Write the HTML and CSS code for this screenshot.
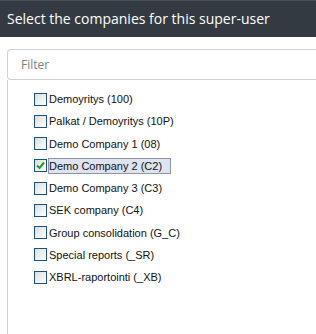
FILE: index.html
```html
<!DOCTYPE html>
<html lang="en">
<head>
    <meta charset="UTF-8">
    <title>Select companies</title>
    <link rel="stylesheet" href="styles.css">
</head>
<body>
    <div class="dialog-header">Select the companies for this super-user</div>

    <div class="dialog-body">
        <div class="filter">
            <input type="text" placeholder="Filter">
        </div>

        <ul class="company-list">
            <li><span class="check"></span><span class="name">Demoyritys (100)</span></li>
            <li><span class="check"></span><span class="name">Palkat / Demoyritys (10P)</span></li>
            <li><span class="check"></span><span class="name">Demo Company 1 (08)</span></li>
            <li class="selected">
                <span class="check checked">
                    <svg width="11" height="11" viewBox="0 0 11 11"><path d="M2 5.5 L4.5 8 L9 2.5" fill="none" stroke="#2a9a2a" stroke-width="2"/></svg>
                </span><span class="name">Demo Company 2 (C2)</span>
            </li>
            <li><span class="check"></span><span class="name">Demo Company 3 (C3)</span></li>
            <li><span class="check"></span><span class="name">SEK company (C4)</span></li>
            <li><span class="check"></span><span class="name">Group consolidation (G_C)</span></li>
            <li><span class="check"></span><span class="name">Special reports (_SR)</span></li>
            <li><span class="check"></span><span class="name">XBRL-raportointi (_XB)</span></li>
        </ul>
    </div>
</body>
</html>
```

FILE: styles.css
```css
* {
    box-sizing: border-box;
    margin: 0;
    padding: 0;
}

body {
    background-color: #ffffff;
    width: 316px;
    height: 334px;
    overflow: hidden;
}

.dialog-header {
    height: 37px;
    background-color: #343a41;
    border-top: 1px solid #4a5058;
    color: #ffffff;
    font-family: 'Open Sans', sans-serif;
    font-size: 14px;
    line-height: 35px;
    padding-left: 7px;
}

.dialog-body {
    padding-left: 7px;
    padding-top: 12px;
}

.filter input {
    display: block;
    width: 100%;
    height: 31px;
    border: 1px solid #cfd1d4;
    border-right: none;
    border-radius: 4px 0 0 4px;
    padding-left: 13px;
    font-family: 'Open Sans', sans-serif;
    font-size: 12px;
    color: #333;
    outline: none;
}

.filter input::placeholder {
    color: #7a7f85;
}

.company-list {
    list-style: none;
    border-left: 1px solid #cfd1d4;
    height: 260px;
    padding-top: 8px;
    padding-left: 26px;
    font-family: 'Liberation Sans', Arial, sans-serif;
    font-size: 11px;
    color: #111;
}

.company-list li {
    display: flex;
    align-items: center;
    height: 22.25px;
}

.check {
    display: inline-flex;
    align-items: center;
    justify-content: center;
    width: 13px;
    height: 13px;
    border: 1px solid #1c5180;
    background: linear-gradient(135deg, #dcdcdc, #ffffff);
    margin-right: 1px;
}

.name {
    padding: 1px 0;
    border: 1px solid transparent;
}

.selected .name {
    background-color: #dde3ef;
    border: 1px solid #8e97a8;
    padding-right: 8px;
}
```
